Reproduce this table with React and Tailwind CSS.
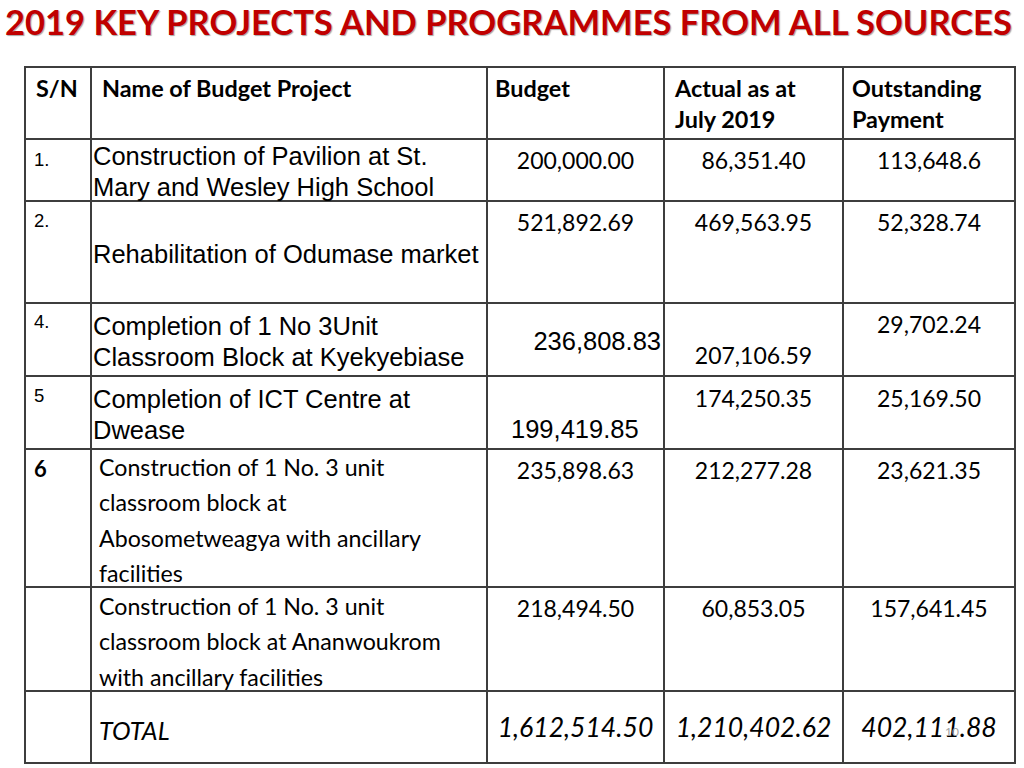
import React from 'react';

const calibri = { fontFamily: 'Lato, "Open Sans", sans-serif' };
const arial = { fontFamily: '"Liberation Sans", Arial, sans-serif' };

// every cell: thin dark grid line, text hangs from the top
const TD = 'border-2 border-[#3d3d3d] align-top p-0';
const NUM = `${TD} text-center text-[23px] leading-[31px]`;
const SN = `${TD} pl-[8px] text-[18.5px] leading-[26px]`;
const ARIAL = `${TD} pl-[1px] text-[25.5px] leading-[31px]`;
const CAL = `${TD} pl-[7px] text-[23.2px] leading-[35.3px]`;

export default function App() {
  return (
    <div className="w-[1024px] h-[768px] bg-white relative overflow-hidden" style={calibri}>
      <h1
        className="pl-[5px] pt-[2px] h-[66px] text-[34.5px] leading-[40px] font-bold text-[#c00000] whitespace-nowrap"
        style={{ textShadow: '1px 1px 1px rgba(0,0,0,0.35)' }}
      >
        2019 KEY PROJECTS AND PROGRAMMES FROM ALL SOURCES
      </h1>

      <table className="ml-[24px] w-[990px] table-fixed border-collapse text-black">
        <colgroup>
          <col className="w-[66px]" />
          <col className="w-[396px]" />
          <col className="w-[177px]" />
          <col className="w-[179px]" />
          <col className="w-[172px]" />
        </colgroup>
        <tbody>
          {/* header */}
          <tr className="h-[72px] font-bold text-[23.4px] leading-[31px]">
            <td className={`${TD} pl-[10px] pt-[5px]`}>S/N</td>
            <td className={`${TD} pl-[10px] pt-[5px]`}>Name of Budget Project</td>
            <td className={`${TD} pl-[7px] pt-[5px]`}>Budget</td>
            <td className={`${TD} pl-[10px] pt-[5px]`}>Actual as at<br />July 2019</td>
            <td className={`${TD} pl-[8px] pt-[5px]`}>Outstanding<br />Payment</td>
          </tr>

          {/* 1 */}
          <tr className="h-[62px]">
            <td className={`${SN} pt-[7px]`} style={arial}>1.</td>
            <td className={`${ARIAL} pt-[1px]`} style={arial}>
              <div className="h-[56px]">
                Construction of Pavilion at St.<br />Mary and Wesley High School
              </div>
            </td>
            <td className={`${NUM} pt-[5px]`}>200,000.00</td>
            <td className={`${NUM} pt-[5px]`}>86,351.40</td>
            <td className={`${NUM} pt-[5px]`}>113,648.6</td>
          </tr>

          {/* 2 */}
          <tr className="h-[102px]">
            <td className={`${SN} pt-[6px]`} style={arial}>2.</td>
            <td className={`${ARIAL} pt-[37px]`} style={arial}>
              Rehabilitation of Odumase market
            </td>
            <td className={`${NUM} pt-[5px]`}>521,892.69</td>
            <td className={`${NUM} pt-[5px]`}>469,563.95</td>
            <td className={`${NUM} pt-[5px]`}>52,328.74</td>
          </tr>

          {/* 4 */}
          <tr className="h-[73px]">
            <td className={`${SN} pt-[5px]`} style={arial}>4.</td>
            <td className={`${ARIAL} pt-[7px]`} style={arial}>
              Completion of 1 No 3Unit<br />Classroom Block at Kyekyebiase
            </td>
            <td className={`${TD} pr-[2px] pt-[22px] text-right text-[25.5px] leading-[31px]`} style={arial}>236,808.83</td>
            <td className={`${NUM} pt-[36px]`}>207,106.59</td>
            <td className={`${NUM} pt-[5px]`}>29,702.24</td>
          </tr>

          {/* 5 */}
          <tr className="h-[73px]">
            <td className={`${SN} pt-[6px]`} style={arial}>5</td>
            <td className={`${ARIAL} pt-[7px]`} style={arial}>
              Completion of ICT Centre at<br />Dwease
            </td>
            <td className={`${TD} pl-[23px] pt-[37px] text-[25.5px] leading-[31px]`} style={arial}>199,419.85</td>
            <td className={`${NUM} pt-[6px]`}>174,250.35</td>
            <td className={`${NUM} pt-[6px]`}>25,169.50</td>
          </tr>

          {/* 6 */}
          <tr className="h-[138px]">
            <td className={`${TD} pl-[8px] pt-[3px] font-bold text-[22px] leading-[31px]`}>6</td>
            <td className={CAL}>
              <div className="h-[132px]">
                Construction of 1 No. 3 unit<br />classroom block at<br />Abosometweagya with ancillary<br />facilities
              </div>
            </td>
            <td className={`${NUM} pt-[5px]`}>235,898.63</td>
            <td className={`${NUM} pt-[5px]`}>212,277.28</td>
            <td className={`${NUM} pt-[5px]`}>23,621.35</td>
          </tr>

          {/* 7 */}
          <tr className="h-[104px]">
            <td className={TD}></td>
            <td className={`${CAL} pt-[1px]`}>
              <div className="h-[98px]">
                Construction of 1 No. 3 unit<br />classroom block at Ananwoukrom<br />with ancillary facilities
              </div>
            </td>
            <td className={`${NUM} pt-[5px]`}>218,494.50</td>
            <td className={`${NUM} pt-[5px]`}>60,853.05</td>
            <td className={`${NUM} pt-[5px]`}>157,641.45</td>
          </tr>

          {/* total */}
          <tr className="h-[72px] italic">
            <td className={TD}></td>
            <td className={`${TD} pl-[7px] pt-[23px] text-[25px] leading-[31px]`}>TOTAL</td>
            <td className={`${TD} text-center pt-[20px] text-[26.6px] leading-[31px]`}>1,612,514.50</td>
            <td className={`${TD} text-center pt-[20px] text-[26.6px] leading-[31px]`}>1,210,402.62</td>
            <td className={`${TD} relative text-center pt-[20px] text-[26.6px] leading-[31px]`}>
              402,111.88
              <span className="absolute left-[101px] top-[34px] not-italic text-[12px] leading-none text-[#a0a0a0]">10</span>
            </td>
          </tr>
        </tbody>
      </table>
    </div>
  );
}
